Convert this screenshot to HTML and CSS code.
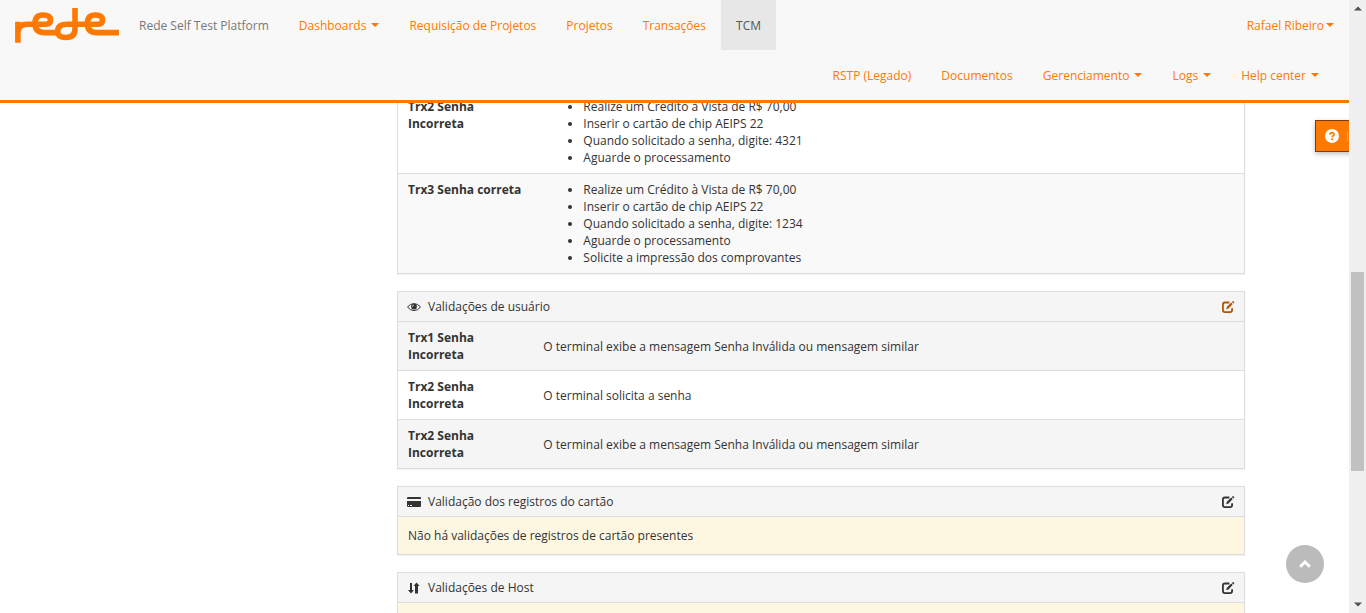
FILE: index.html
```html
<!DOCTYPE html>
<html lang="pt-BR">
<head>
<meta charset="utf-8">
<title>Rede Self Test Platform</title>
<link rel="stylesheet" href="styles.css">
</head>
<body>
<svg class="defs" aria-hidden="true">
  <symbol id="edit" viewBox="0 0 14 14">
    <path d="M8.400 2.500H4Q1.900 2.500 1.900 4.600v5.400Q1.900 12.100 4 12.100h5Q11.100 12.100 11.100 10V8.200" fill="none" stroke="currentColor" stroke-width="1.800"/>
    <path d="M5.200 9.200l.7-2.400L10.200 2.600l1.500 1.500L7.500 8.400z M10.900 1.900l.7-.7q.4-.3.800 0l.7.7q.4.400 0 .8l-.7.700z" fill="currentColor"/>
  </symbol>
</svg>
<div class="window">
  <div class="app">
    <header class="navbar">
      <nav class="nav-row">
        <a class="logo" href="#" aria-label="Rede">
          <svg width="104" height="35" viewBox="0 0 104 35" fill="none" stroke="currentColor" stroke-width="5.600">
            <path d="M2.900 34.700V13.700M2.900 25Q3 16.200 12 16.200H31Q35.500 16.200 35.500 12Q35.500 7 28 7Q20 7 20 15.500Q20 24.600 30 24.600H43"/>
            <path d="M60 0V21Q60 29.500 51 29.500Q42.600 29.500 42.600 23.500Q42.600 16.200 52 16.200H83Q87.500 16.200 87.500 12Q87.500 7 80.500 7Q72.400 7 72.400 15.500Q72.400 24.600 82 24.600H104"/>
          </svg>
        </a>
        <span class="brand">Rede Self Test Platform</span>
        <a class="link" href="#">Dashboards <i class="caret"></i></a>
        <a class="link" href="#">Requisição de Projetos</a>
        <a class="link" href="#">Projetos</a>
        <a class="link" href="#">Transações</a>
        <a class="link active" href="#">TCM</a>
        <a class="link user" href="#">Rafael Ribeiro<i class="caret"></i></a>
      </nav>
      <nav class="nav-row secondary">
        <a class="link" href="#">RSTP (Legado)</a>
        <a class="link" href="#">Documentos</a>
        <a class="link" href="#">Gerenciamento <i class="caret"></i></a>
        <a class="link" href="#">Logs <i class="caret"></i></a>
        <a class="link" href="#">Help center <i class="caret"></i></a>
      </nav>
    </header>

    <main class="content">
      <section class="panel">
        <table class="steps">
          <tr>
            <th scope="row">Trx2 Senha Incorreta</th>
            <td><ul>
              <li>Realize um Crédito à Vista de R$ 70,00</li>
              <li>Inserir o cartão de chip AEIPS 22</li>
              <li>Quando solicitado a senha, digite: 4321</li>
              <li>Aguarde o processamento</li>
            </ul></td>
          </tr>
          <tr class="light">
            <th scope="row">Trx3 Senha correta</th>
            <td><ul>
              <li>Realize um Crédito à Vista de R$ 70,00</li>
              <li>Inserir o cartão de chip AEIPS 22</li>
              <li>Quando solicitado a senha, digite: 1234</li>
              <li>Aguarde o processamento</li>
              <li>Solicite a impressão dos comprovantes</li>
            </ul></td>
          </tr>
        </table>
      </section>

      <section class="panel">
        <h2 class="heading">
          <svg class="icon" viewBox="0 0 14 14" aria-hidden="true">
            <path d="M.5 7Q3.300 3.600 7 3.600T13.500 7Q10.700 10.600 7 10.600T.5 7z" fill="none" stroke="currentColor"/>
            <circle cx="7" cy="6.600" r="2.900" fill="currentColor"/>
            <path d="M5.400 6.800Q5.400 5.300 6.900 5" fill="none" stroke="#f5f5f5" stroke-width=".8"/>
          </svg>
          <span>Validações de usuário</span>
          <button class="edit hover" aria-label="Editar validações de usuário"><svg class="icon"><use href="#edit"/></svg></button>
        </h2>
        <table class="checks">
          <tr class="shade"><th scope="row">Trx1 Senha Incorreta</th><td>O terminal exibe a mensagem Senha Inválida ou mensagem similar</td></tr>
          <tr><th scope="row">Trx2 Senha Incorreta</th><td>O terminal solicita a senha</td></tr>
          <tr class="shade"><th scope="row">Trx2 Senha Incorreta</th><td>O terminal exibe a mensagem Senha Inválida ou mensagem similar</td></tr>
        </table>
      </section>

      <section class="panel">
        <h2 class="heading">
          <svg class="icon" viewBox="0 0 14 14" aria-hidden="true">
            <path fill-rule="evenodd" d="M1 2h12q1 0 1 1v1H0V3q0-1 1-1zM0 6h14v5q0 1-1 1H1q-1 0-1-1zM1 10v1h1v-1zM3 10v1h2v-1z" fill="currentColor"/>
          </svg>
          <span>Validação dos registros do cartão</span>
          <button class="edit" aria-label="Editar validação dos registros do cartão"><svg class="icon"><use href="#edit"/></svg></button>
        </h2>
        <p class="notice">Não há validações de registros de cartão presentes</p>
      </section>

      <section class="panel">
        <h2 class="heading">
          <svg class="icon" viewBox="0 0 14 14" aria-hidden="true">
            <path d="M3 2h2v7h2l-3 3.500L1 9h2zM8 12.500V5H6.500L9.500 1.500 12.500 5H11v7.500z" fill="currentColor"/>
          </svg>
          <span>Validações de Host</span>
          <button class="edit" aria-label="Editar validações de Host"><svg class="icon"><use href="#edit"/></svg></button>
        </h2>
        <p class="notice"></p>
      </section>
    </main>

    <button class="help" aria-label="Help">
      <svg class="icon" viewBox="0 0 14 14" aria-hidden="true">
        <circle cx="7" cy="7" r="7" fill="#fff"/>
        <path d="M4.900 5.600Q5 3.700 7 3.700T9.100 5.500Q9.100 6.500 8 7Q7.200 7.400 7.200 8.300" fill="none" stroke="#ff7800" stroke-width="1.700"/>
        <path d="M6.200 9.300h1.900v1.800H6.200z" fill="#ff7800"/>
      </svg>
      <i class="help-mark"></i>
    </button>
    <button class="to-top" aria-label="Voltar ao topo">
      <svg class="icon" viewBox="0 0 14 14"><path d="M1.200 8.800L7 3l5.800 5.800-1.900 1.900L7 6.900l-3.900 3.800z" fill="#fff"/></svg>
    </button>
  </div>

  <div class="scrollbar" aria-hidden="true">
    <svg width="17" height="17"><path d="M5 10.500h8L9 6.500z" fill="#505050"/></svg>
    <div class="track"><div class="thumb"></div></div>
    <svg width="17" height="17"><path d="M5 6.500h8L9 10.500z" fill="#505050"/></svg>
  </div>
</div>
</body>
</html>
```
FILE: styles.css
```css
* { box-sizing: border-box; }
body {
  margin: 0;
  font: 12px/17px "Open Sans", sans-serif;
  color: #333;
  background: #fff;
}
.defs { position: absolute; width: 0; height: 0; }
button { font: inherit; cursor: pointer; }
.window { display: flex; height: 100vh; overflow: hidden; }
.app { position: relative; flex: 1; min-width: 0; overflow: hidden; }

.navbar {
  position: absolute;
  top: 0;
  left: 0;
  right: 0;
  z-index: 2;
  background: #f8f8f8;
  border-bottom: 3px solid #ff7800;
}
.nav-row { display: flex; align-items: stretch; height: 50px; }
.secondary { justify-content: flex-end; padding-right: 15px; }
.logo { display: flex; align-items: center; padding: 0 5px 0 15px; color: #ff7800; }
.brand, .link { display: flex; align-items: center; padding: 0 15px; white-space: nowrap; }
.brand { color: #777; }
.link { color: #ff7800; text-decoration: none; }
.active { color: #555; background: #e7e7e7; }
.user { margin-left: auto; }
.caret {
  border: 4px solid transparent;
  border-top-color: currentColor;
  border-bottom: 0;
  margin-left: 5px;
}
.user .caret { margin-left: 2px; }

.content {
  display: flex;
  flex-direction: column;
  gap: 17px;
  padding: 90px 104px 17px 397px;
}
.panel {
  border: 1px solid #ddd;
  box-shadow: 0 1px 1px rgba(0, 0, 0, .05);
}
.heading {
  display: flex;
  align-items: center;
  gap: 7px;
  margin: 0;
  padding: 6px 9px;
  font-size: 12px;
  font-weight: 400;
  background: #f5f5f5;
  border-bottom: 1px solid #ddd;
}
.icon { display: block; width: 14px; height: 14px; flex: none; }
.edit {
  margin-left: auto;
  padding: 0;
  border: 0;
  background: none;
  color: #333;
}
.edit.hover { color: #b35400; }
table { width: 100%; table-layout: fixed; border-collapse: separate; border-spacing: 0; }
th, td { padding: 7px 10px; text-align: left; }
th { width: 16%; font-weight: 700; vertical-align: top; }
tr + tr > * { border-top: 1px solid #ddd; }
ul { margin: 0; padding-left: 40px; }
.light { background: #f9f9f9; }
.shade { background: #f5f5f5; }
.notice { margin: 0; padding: 10px; min-height: 37px; background: #fdf7e2; }

.help {
  position: absolute;
  top: 120px;
  left: calc(100% - 34px);
  z-index: 1;
  display: flex;
  align-items: center;
  gap: 8px;
  height: 32px;
  padding: 0 9px;
  color: #fff;
  background: #ff7800;
  border: 1px solid #803c00;
  box-shadow: 0 2px 5px rgba(0, 0, 0, .25);
}
.help-mark { width: 1px; height: 9px; background: #ffa14d; }
.to-top {
  position: absolute;
  right: 25px;
  bottom: 30px;
  display: grid;
  place-items: center;
  width: 38px;
  height: 38px;
  padding: 0;
  border: 0;
  border-radius: 50%;
  background: #bbb;
}
.scrollbar { display: flex; flex-direction: column; width: 17px; background: #f0f0f0; }
.scrollbar svg { display: block; }
.track { display: grid; grid-template-rows: 255fr 199fr 125fr; flex: 1; padding: 0 2px; }
.thumb { grid-row: 2; background: #c1c1c1; }
```
